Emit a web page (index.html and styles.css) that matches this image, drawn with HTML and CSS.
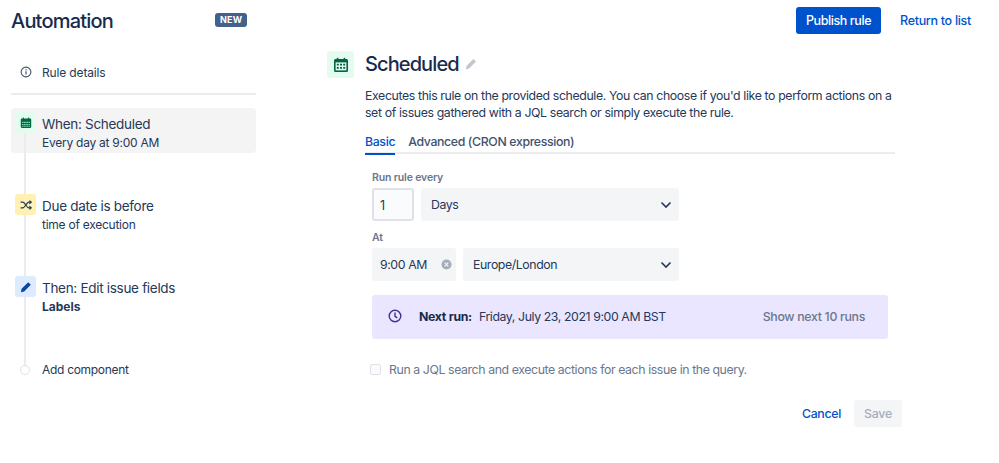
FILE: index.html
```html
<!DOCTYPE html>
<html lang="en">
<head>
<meta charset="utf-8">
<title>Automation</title>
<link rel="stylesheet" href="styles.css">
</head>
<body>
<div class="page">
  <aside class="sidebar">
    <div class="brand">
      <h1>Automation</h1>
      <span class="badge">NEW</span>
    </div>
    <div class="details">
      <svg class="info" viewBox="0 0 12 12" width="12" height="12"><circle cx="6" cy="6" r="4.9" fill="none" stroke="#42526e" stroke-width="1.1"/><rect x="5.4" y="5.3" width="1.2" height="3.2" fill="#42526e"/><rect x="5.4" y="3.2" width="1.2" height="1.2" fill="#42526e"/></svg>
      <span>Rule details</span>
    </div>
    <div class="steps">
      <div class="rail"></div>
      <div class="step active">
        <span class="ico green"><svg viewBox="0 0 12 12" width="12" height="12"><path d="M2 1.6h8a1.2 1.2 0 0 1 1.2 1.2v7a1.2 1.2 0 0 1-1.2 1.2H2A1.2 1.2 0 0 1 .8 9.800v-7A1.2 1.2 0 0 1 2 1.600z" fill="#006644"/><rect x="2.800" y=".6" width="1.2" height="2" fill="#006644"/><rect x="8" y=".6" width="1.2" height="2" fill="#006644"/><path d="M2 4.800h1.600v1.300H2zM4 4.800h1.800v1.300H4zM6.200 4.800H8v1.300H6.200zM8.400 4.800H10v1.300H8.400zM2 7h1.600v1.300H2zM4 7h1.800v1.300H4zM6.200 7H8v1.300H6.200zM8.400 7H10v1.300H8.400zM2 9h1.600v.8H2zM4 9h1.800v.8H4zM6.200 9H8v.8H6.200zM8.400 9H10v.8H8.400z" fill="#79d2a8"/></svg></span>
        <div class="txt"><div class="t1">When: Scheduled</div><div class="t2">Every day at 9:00 AM</div></div>
      </div>
      <div class="step cond">
        <span class="ico yellow"><svg viewBox="0 0 12 12" width="12" height="12" fill="none" stroke="#253858" stroke-width="1.200"><path d="M.6 3.200h2.200c2.400 0 3.600 5.600 6 5.600h1.800"/><path d="M.6 8.800h2.200c2.400 0 3.600-5.600 6-5.600h1.800"/><path d="M9.400 1.600l1.800 1.600-1.800 1.600M9.400 7.200l1.800 1.600-1.800 1.600"/></svg></span>
        <div class="txt"><div class="t1">Due date is before</div><div class="t2">time of execution</div></div>
      </div>
      <div class="step then">
        <span class="ico blue"><svg viewBox="0 0 12 12" width="12" height="12"><path d="M8.200 1.200l2.600 2.600-6.600 6.600-3.300.8.700-3.400z" fill="#0747a6"/></svg></span>
        <div class="txt"><div class="t1">Then: Edit issue fields</div><div class="t2 strong">Labels</div></div>
      </div>
      <div class="step add">
        <span class="dot"></span>
        <div class="txt"><div class="t3">Add component</div></div>
      </div>
    </div>
  </aside>

  <main class="main">
    <div class="topbar">
      <button class="publish">Publish rule</button>
      <a class="back">Return to list</a>
    </div>
    <div class="panel">
      <span class="bigico"><svg viewBox="0 0 16 16" width="16" height="16"><path d="M2.500 2h11A1.500 1.500 0 0 1 15 3.500v10a1.500 1.500 0 0 1-1.500 1.500h-11A1.500 1.500 0 0 1 1 13.500v-10A1.500 1.500 0 0 1 2.500 2z" fill="#006644"/><rect x="3.800" y=".8" width="1.500" height="3" fill="#006644"/><rect x="10.700" y=".8" width="1.500" height="3" fill="#006644"/><path d="M2.600 5.400h10.800v8H2.600z" fill="#e3fcef"/><path d="M3.800 6.800h2v1.800h-2zM7 6.800h2v1.800H7zM10.200 6.800h2v1.800h-2zM3.800 10h2v1.800h-2zM7 10h2v1.800H7zM10.200 10h2v1.800h-2z" fill="#006644"/></svg></span>
      <div class="content">
        <div class="title-row">
          <h2>Scheduled</h2>
          <svg viewBox="0 0 12 12" width="12" height="12"><path d="M8.400 1l2.600 2.600-7 7-3.200.7.700-3.300z" fill="#c1c7d0"/></svg>
        </div>
        <p class="desc">Executes this rule on the provided schedule. You can choose if you'd like to perform actions on a set of issues gathered with a JQL search or simply execute the rule.</p>
        <div class="tabs">
          <span class="tab on">Basic</span>
          <span class="tab">Advanced (CRON expression)</span>
        </div>
        <div class="form">
          <label class="lbl first">Run rule every</label>
          <div class="row">
            <div class="num">1</div>
            <div class="sel grow"><span>Days</span><svg class="chev" viewBox="0 0 12 8" width="12" height="8"><path d="M1.500 1.500L6 6l4.500-4.500" fill="none" stroke="#253858" stroke-width="1.600"/></svg></div>
          </div>
          <label class="lbl">At</label>
          <div class="row">
            <div class="time"><span>9:00 AM</span><svg viewBox="0 0 12 12" width="11" height="11"><circle cx="6" cy="6" r="5.500" fill="#a5adba"/><path d="M4 4l4 4M8 4l-4 4" stroke="#f4f5f7" stroke-width="1.300"/></svg></div>
            <div class="sel grow"><span>Europe/London</span><svg class="chev" viewBox="0 0 12 8" width="12" height="8"><path d="M1.500 1.500L6 6l4.500-4.500" fill="none" stroke="#253858" stroke-width="1.600"/></svg></div>
          </div>
          <div class="banner">
            <svg viewBox="0 0 14 14" width="14" height="14" fill="none" stroke="#403294" stroke-width="1.400"><circle cx="7" cy="7" r="5.800"/><path d="M7 3.600V7.300l2.300 1.500"/></svg>
            <span class="nr"><b>Next run:</b><span>Friday, July 23, 2021 9:00 AM BST</span></span>
            <span class="more">Show next 10 runs</span>
          </div>
        </div>
        <div class="check"><span class="box"></span><span>Run a JQL search and execute actions for each issue in the query.</span></div>
        <div class="actions">
          <a class="cancel">Cancel</a>
          <button class="save">Save</button>
        </div>
      </div>
    </div>
  </main>
</div>
</body>
</html>
```
FILE: styles.css
```css
* { box-sizing: border-box; }
html, body { margin: 0; padding: 0; background: #fff; }
body { font-family: Inter, "Liberation Sans", sans-serif; color: #172b4d; width: 999px; height: 463px; overflow: hidden; }
.page { display: flex; align-items: flex-start; }

.sidebar { width: 245px; margin-left: 11px; flex: none; }
.brand { display: flex; justify-content: space-between; align-items: center; height: 42px; padding-right: 9px; }
h1 { margin: 0; font-size: 20px; font-weight: 500; letter-spacing: -.8px; line-height: 24px; color: #172b4d; }
.badge { background: #42628a; color: #fff; font-size: 9px; font-weight: 700; letter-spacing: .3px; border-radius: 3px; padding: 0 4.500px; height: 14px; line-height: 14px; margin-top: -2px; }
.details { display: flex; align-items: center; height: 53px; padding: 9px 0 0 9px; border-bottom: 2px solid #ebecf0; gap: 10px; font-size: 12px; color: #253858; }
.details span { letter-spacing: -.15px; }
.info { flex: none; }

.steps { position: relative; padding-top: 13px; }
.rail { position: absolute; left: 13px; top: 30px; bottom: 12px; width: 2px; background: #ebecf0; z-index: 1; }
.step { position: relative; display: flex; align-items: flex-start; gap: 6px; padding-left: 4px; }
.step.active { background: #f4f4f4; border-radius: 4px; height: 45px; padding-top: 4px; }
.step.cond { margin-top: 41px; }
.step.then { margin-top: 43px; }
.step.add { margin-top: 46px; align-items: center; padding-left: 9px; gap: 12px; }
.ico { position: relative; z-index: 2; width: 21px; height: 21px; border-radius: 3px; display: flex; align-items: center; justify-content: center; flex: none; }
.green { background: #e3fcef; }
.yellow { background: #fff0b3; }
.blue { background: #deebff; }
.txt { padding-top: 2px; }
.t1 { font-size: 13.500px; line-height: 20px; color: #253858; letter-spacing: -.3px; }
.t2 { font-size: 12px; line-height: 16px; margin-top: 1px; color: #253858; letter-spacing: -.25px; }
.t2.strong { font-weight: 700; letter-spacing: 0; }
.t3 { font-size: 12px; line-height: 16px; color: #253858; letter-spacing: -.3px; }
.add .txt { padding-top: 1px; }
.dot { position: relative; z-index: 2; width: 10px; height: 10px; border-radius: 50%; border: 1px solid #dfe1e6; background: #fff; flex: none; }

.main { flex: 1; margin-left: 71px; min-width: 0; }
.topbar { display: flex; justify-content: flex-end; align-items: center; height: 27px; margin-top: 7px; padding-right: 28px; gap: 19px; }
.publish { border: 0; background: #0052cc; color: #fff; font: 500 12.500px Inter, "Liberation Sans", sans-serif; letter-spacing: -.4px; border-radius: 3px; width: 85px; height: 27px; padding: 0; }
.back { color: #0052cc; font-size: 12.500px; font-weight: 500; letter-spacing: -.3px; }

.panel { display: flex; gap: 11px; margin-top: 17px; }
.bigico { width: 27px; height: 27px; background: #e3fcef; border-radius: 3px; display: flex; align-items: center; justify-content: center; flex: none; }
.content { width: 530px; }
.title-row { display: flex; align-items: center; gap: 6px; height: 27px; padding-bottom: 1px; }
h2 { margin: 0; font-size: 20px; font-weight: 500; letter-spacing: -.9px; color: #172b4d; line-height: 25px; }
.desc { margin: 9px 0 0; font-size: 12.300px; line-height: 17px; color: #253858; letter-spacing: -.37px; }
.tabs { display: flex; gap: 13px; margin-top: 10px; border-bottom: 2px solid #ebecf0; height: 23px; font-size: 12.300px; font-weight: 500; color: #42526e; line-height: 16px; padding-top: 3px; letter-spacing: -.35px; }
.tab { height: 21px; }
.tab.on { color: #0052cc; border-bottom: 2px solid #0052cc; }

.form { padding-left: 7px; width: 523px; }
.lbl { display: block; font-size: 10.500px; font-weight: 600; color: #6b778c; line-height: 14px; margin: 10px 0 3px; letter-spacing: -.15px; }
.lbl.first { margin-top: 17px; }
.row { display: flex; gap: 7px; width: 307px; height: 33px; }
.num { width: 42px; flex: none; border: 2px solid #dfe1e6; border-radius: 3px; background: #fafbfc; font-size: 12.500px; line-height: 31px; padding-left: 6px; color: #253858; }
.sel { background: #f4f5f7; border-radius: 3px; display: flex; align-items: center; justify-content: space-between; padding: 0 7px 0 10px; font-size: 12.300px; color: #253858; letter-spacing: -.4px; }
.grow { flex: 1; }
.chev { flex: none; }
.time { width: 84px; flex: none; background: #f4f5f7; border-radius: 3px; display: flex; align-items: center; justify-content: space-between; padding: 0 4px 0 8px; font-size: 12.300px; color: #253858; letter-spacing: -.4px; }
.banner { display: flex; align-items: center; margin-top: 14px; height: 44px; width: 516px; background: #eae6ff; border-radius: 3px; padding: 0 23px 2px 16px; font-size: 12.300px; color: #253858; }
.nr { display: flex; gap: 7px; margin-left: 17px; letter-spacing: -.4px; }
.nr b { font-weight: 700; color: #172b4d; letter-spacing: -.3px; }
.more { margin-left: auto; color: #6b778c; font-weight: 500; letter-spacing: -.3px; }

.check { display: flex; align-items: center; gap: 8px; margin-top: 22px; margin-left: 5px; height: 17px; font-size: 12.300px; color: #6b778c; letter-spacing: -.4px; }
.box { width: 11px; height: 11px; border: 1.500px solid #dfe1e6; border-radius: 2px; background: #fafbfc; flex: none; }
.actions { display: flex; justify-content: flex-end; align-items: center; gap: 13px; margin-top: 22px; width: 537px; }
.cancel { color: #0052cc; font-size: 12.300px; font-weight: 500; letter-spacing: -.3px; }
.save { border: 0; background: #f4f5f7; color: #a5adba; font: 500 12.300px Inter, "Liberation Sans", sans-serif; letter-spacing: -.2px; width: 48px; height: 27px; border-radius: 3px; padding: 0; }
```
